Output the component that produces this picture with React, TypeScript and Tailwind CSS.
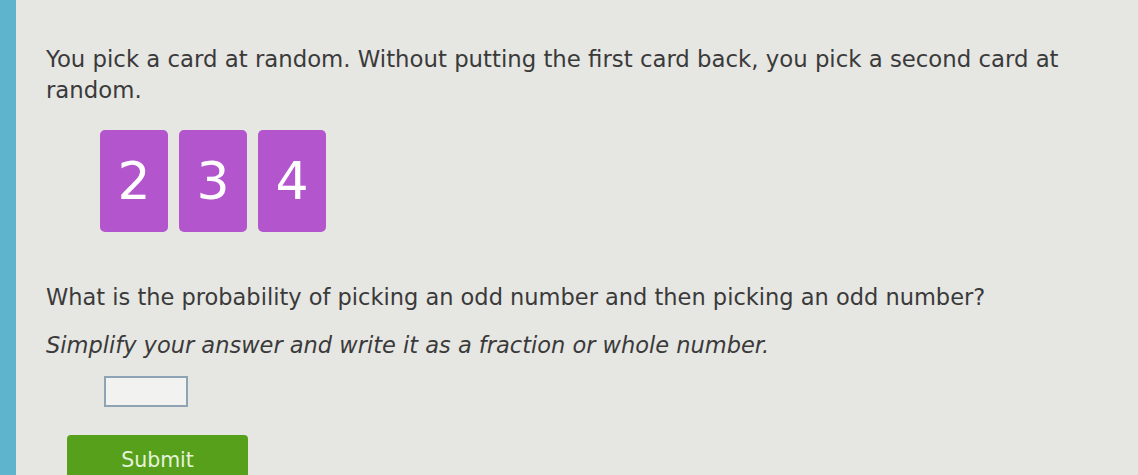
import React from "react";

const cards = [2, 3, 4];

export default function App() {
  return (
    <div className="flex h-[475px] w-[1138px] overflow-hidden bg-[#e6e6e3] font-['DejaVu_Sans',sans-serif] text-[#3a3a3a]">
      <div className="w-[16px] shrink-0 bg-[#5db4cc]" />
      <div className="flex flex-1 flex-col pl-[30px] pt-[44px] [&>*]:shrink-0">
        <p className="w-[1040px] text-[22.8px] leading-[31px]">
          You pick a card at random. Without putting the first card back, you pick a second card at random.
        </p>
        <div className="mt-[24px] flex gap-[11px] pl-[54px]">
          {cards.map((n) => (
            <div
              key={n}
              className="flex h-[102px] w-[68px] items-center justify-center rounded-[5px] bg-[#b355cc] text-[52px] text-white"
            >
              {n}
            </div>
          ))}
        </div>
        <p className="mt-[51px] text-[22.5px] leading-[28px]">
          What is the probability of picking an odd number and then picking an odd number?
        </p>
        <p className="mt-[20px] text-[22.5px] italic leading-[28px]">
          Simplify your answer and write it as a fraction or whole number.
        </p>
        <div className="ml-[58px] mt-[17px] h-[31px] w-[84px] border-2 border-[#8ea4b4] bg-[#f2f2f0]" />
        <button className="ml-[21px] mt-[28px] flex h-[50px] w-[181px] justify-center rounded-t-[4px] bg-[#57a01c] pt-[10px] text-[20.5px] text-[#e6f2d8]">
          Submit
        </button>
      </div>
    </div>
  );
}
